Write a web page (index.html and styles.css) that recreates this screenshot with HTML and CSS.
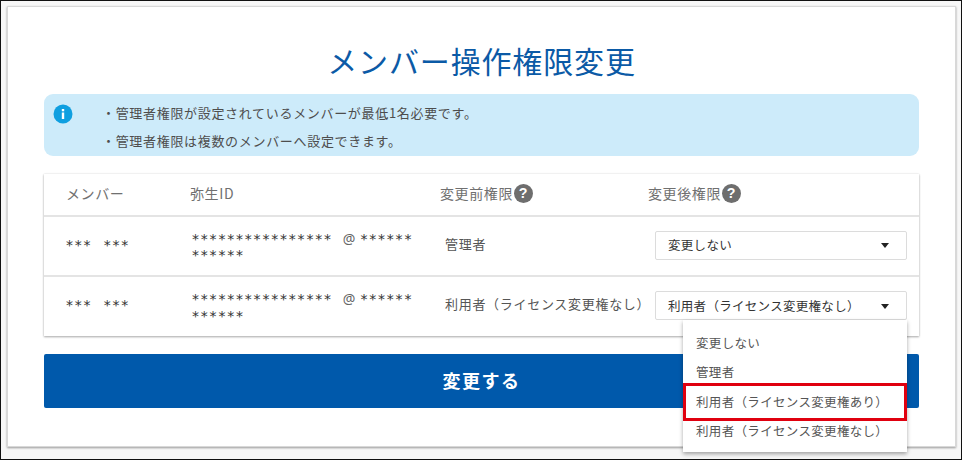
FILE: index.html
```html
<!DOCTYPE html>
<html lang="ja">
<head>
<meta charset="utf-8">
<title>メンバー操作権限変更</title>
<link rel="stylesheet" href="styles.css">
</head>
<body>
<div class="frame">
  <main class="card">
    <h1 class="title">メンバー操作権限変更</h1>
    <section class="alert">
      <svg class="info-icon" viewBox="0 0 20 20" width="20" height="20"><circle cx="10" cy="10" r="9.5" fill="#0f9fe0"/><rect x="8.8" y="8.5" width="2.4" height="6.5" fill="#fff"/><rect x="8.8" y="5" width="2.4" height="2.3" fill="#fff"/></svg>
      <ul class="alert-list">
        <li>・管理者権限が設定されているメンバーが最低1名必要です。</li>
        <li>・管理者権限は複数のメンバーへ設定できます。</li>
      </ul>
    </section>
    <section class="table">
      <div class="row head">
        <div class="c-member">メンバー</div>
        <div class="c-id">弥生ID</div>
        <div class="c-before">変更前権限<svg class="help" viewBox="0 0 20 20" width="19" height="19"><circle cx="10" cy="10" r="10" fill="#6e6e6e"/><text x="10" y="15" text-anchor="middle" class="help-mark">?</text></svg></div>
        <div class="c-after">変更後権限<svg class="help" viewBox="0 0 20 20" width="19" height="19"><circle cx="10" cy="10" r="10" fill="#6e6e6e"/><text x="10" y="15" text-anchor="middle" class="help-mark">?</text></svg></div>
      </div>
      <div class="row body">
        <div class="c-member mask">*** ***</div>
        <div class="c-id mask">****************<span class="at">@</span>******<br>******</div>
        <div class="c-before role">管理者</div>
        <div class="c-after"><div class="select"><span>変更しない</span><i class="caret"></i></div></div>
      </div>
      <div class="row body last">
        <div class="c-member mask">*** ***</div>
        <div class="c-id mask loose">****************<span class="at">@</span>******<br>******</div>
        <div class="c-before role">利用者（ライセンス変更権なし）</div>
        <div class="c-after"><div class="select"><span>利用者（ライセンス変更権なし）</span><i class="caret"></i></div></div>
      </div>
    </section>
    <button class="submit">変更する</button>
    <div class="menu">
      <ul class="menu-list">
        <li>変更しない</li>
        <li>管理者</li>
        <li>利用者（ライセンス変更権あり）</li>
        <li>利用者（ライセンス変更権なし）</li>
      </ul>
      <div class="marker"></div>
    </div>
  </main>
</div>
</body>
</html>
```

FILE: styles.css
```css
* { box-sizing: border-box; }
html, body { margin: 0; padding: 0; }
body {
  width: 962px;
  height: 460px;
  overflow: hidden;
  font-family: "Noto Sans CJK JP", "Noto Sans", sans-serif;
  color: #555;
}
.frame {
  width: 962px;
  height: 460px;
  background: #f7f7f7;
  border: 1px solid #111;
  padding: 5px 6px 12px 6px;
}
.card {
  position: relative;
  width: 949px;
  height: 441px;
  background: #fff;
  border: 1px solid #d8d8d8;
  box-shadow: 0 1px 2px #999;
  padding: 0 36px;
}
.title {
  margin: 0;
  padding-top: 31px;
  height: 87px;
  text-align: center;
  font-size: 30px;
  line-height: 44px;
  font-weight: 400;
  letter-spacing: 0.85px;
  color: #0b5aa6;
}
.alert {
  display: flex;
  height: 62px;
  background: #cdebfa;
  border-radius: 9px;
  padding: 5px 0 0 9px;
}
.info-icon { flex: none; margin: 5px 29px 0 0; }
.alert-list {
  list-style: none;
  margin: 0;
  padding: 0;
  font-size: 13px;
  line-height: 27.5px;
  letter-spacing: 0.68px;
  color: #4d4d4d;
}
.table {
  margin-top: 18px;
  background: #fff;
  box-shadow: 0 1px 2px #aaa, 0 0 2px #e5e5e5;
}
.row {
  display: flex;
  align-items: center;
  padding-left: 22px;
}
.head {
  height: 41px;
  padding-bottom: 3px;
  font-size: 14px;
  letter-spacing: 0.6px;
  color: #707070;
}
.body {
  height: 60px;
  border-top: 2px solid #e4e4e4;
  font-size: 13px;
}
.last { height: 61px; }
.c-member { width: 124px; }
.c-id { width: 250px; }
.c-before { width: 208px; display: flex; align-items: center; }
.c-after { flex: 1; display: flex; align-items: center; }
.help { margin-left: 1px; }
.help-mark { font: 700 15px "Liberation Sans", sans-serif; fill: #fff; }
.mask {
  font-family: "DejaVu Sans", sans-serif;
  font-size: 14px;
  line-height: 16.5px;
  letter-spacing: 1.8px;
  word-spacing: 5px;
  color: #333;
  padding-bottom: 2px;
}
.c-id.mask { padding: 2px 0 0 2px; }
.c-id.loose { line-height: 17.5px; }
.at {
  font-family: "Noto Sans", sans-serif;
  font-size: 14px;
  letter-spacing: 0;
  color: #666;
  margin: 0 5px 0 10px;
}
.role {
  font-size: 13px;
  letter-spacing: 0.7px;
  padding-left: 5px;
  padding-bottom: 6px;
}
.select {
  display: flex;
  align-items: center;
  justify-content: space-between;
  width: 252px;
  height: 29px;
  margin: 0 0 2px 7px;
  padding: 0 17px 1px 12px;
  border: 1px solid #dcdcdc;
  border-radius: 2px;
  background: #fff;
  font-size: 12.5px;
  letter-spacing: 0.3px;
  color: #333;
}
.caret {
  width: 0;
  height: 0;
  margin-top: 2px;
  border-left: 4.5px solid transparent;
  border-right: 4.5px solid transparent;
  border-top: 5px solid #222;
}
.submit {
  display: block;
  width: 100%;
  height: 54px;
  margin-top: 18px;
  border: 0;
  border-radius: 2px;
  background: #0059ab;
  color: #fff;
  font-family: inherit;
  font-size: 18px;
  font-weight: 700;
  letter-spacing: 1.5px;
  padding: 0 0 2px;
}
.menu {
  position: absolute;
  left: 675px;
  top: 313px;
  width: 224px;
  height: 132px;
  background: #fff;
  box-shadow: 0 2px 4px rgba(0,0,0,.35);
}
.menu-list {
  list-style: none;
  margin: 0;
  padding: 8px 0 0;
  font-size: 12.5px;
  letter-spacing: 0.33px;
  color: #555;
}
.menu-list li {
  height: 29.3px;
  line-height: 29px;
  padding-left: 13px;
}
.marker {
  position: absolute;
  left: 0;
  right: 0;
  top: 63px;
  height: 38px;
  border: 3px solid #e0000f;
}
```
